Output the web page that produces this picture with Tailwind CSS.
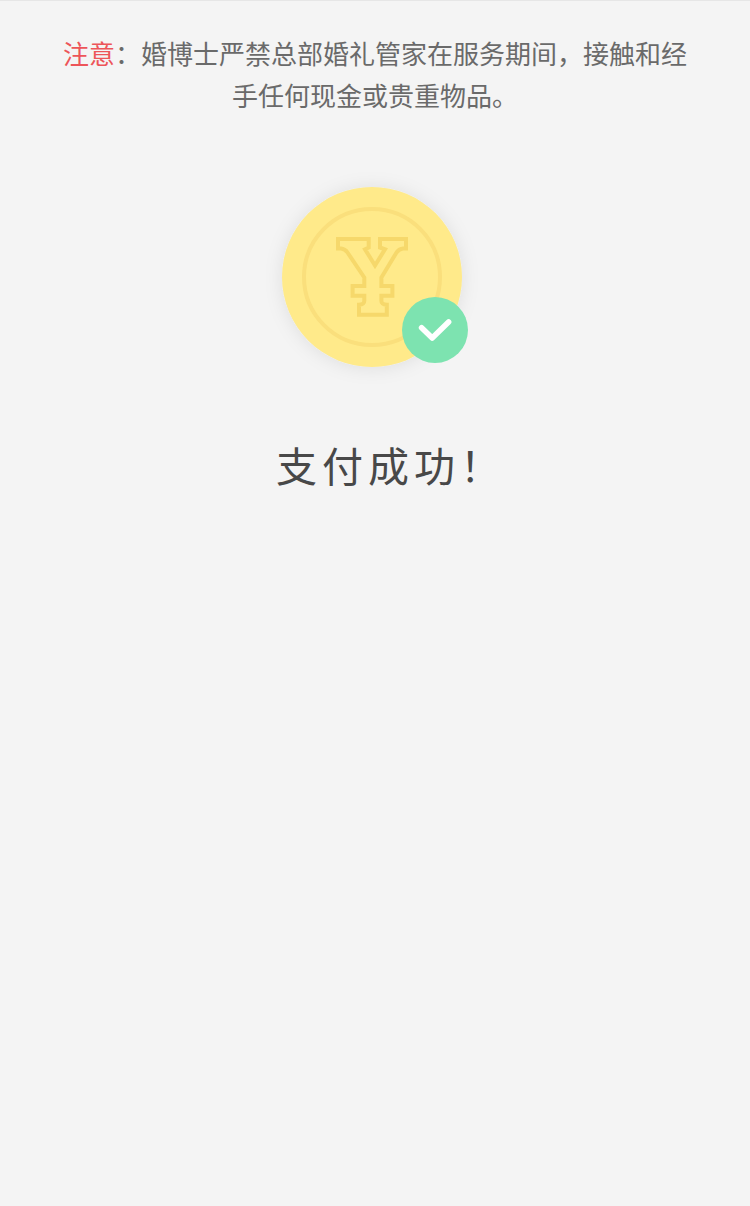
<!DOCTYPE html>
<html lang="zh-CN">
<head>
<meta charset="utf-8">
<title>支付成功</title>
<script src="https://cdn.jsdelivr.net/npm/@tailwindcss/browser@4"></script>
</head>
<body class="min-h-screen bg-[#f4f4f4] border-t border-[#e6e6e6] font-['Noto_Sans_CJK_SC',sans-serif] font-normal flex flex-col items-center">
  <p class="mt-[31px] w-[624px] text-[26px] leading-[42px] text-[#6a6a6a] text-center whitespace-nowrap"><span class="text-[#ed5559]">注意</span>：婚博士严禁总部婚礼管家在服务期间，接触和经<br>手任何现金或贵重物品。</p>
  <svg class="mt-[41px] w-[250px] h-[230px]" viewBox="250 157 250 230" fill="none">
    <defs>
      <filter id="shadow" x="-20%" y="-20%" width="140%" height="140%">
        <feDropShadow dx="0" dy="1" stdDeviation="9" flood-color="#000" flood-opacity="0.09"/>
      </filter>
    </defs>
    <circle cx="372" cy="277" r="90" fill="#ffea8a" filter="url(#shadow)"/>
    <circle cx="372" cy="277" r="68" stroke="#fadf7c" stroke-width="4"/>
    <path stroke="#f6d86b" stroke-width="4" d="M338 239H368.7V247.5L365 249.3L375 265.5L385 249.3L380 247.5V239H406V248.5H403C399.5 248.7 398 250.5 396.5 252.5L381.4 277.5V286H392.4V295.8H381.4V301C381.4 303.5 383 304.5 386.8 304.7V314.8H359V304.7C362.8 304.5 364.3 303.5 364.3 301V295.8H352.6V286H364.3V277.5L347.5 252.5C346 250.3 344 248.7 341 248.5H338Z"/>
    <circle cx="435" cy="330" r="33" fill="#7de3b0"/>
    <path d="M421.6 327.7L432.2 338L448.6 322" stroke="#fff" stroke-width="5.6" stroke-linecap="round" stroke-linejoin="round"/>
  </svg>
  <h1 class="mt-[45px] pl-[32px] text-[41px] leading-[64px] tracking-[5px] font-normal text-[#484848] whitespace-nowrap">支付成功！</h1>
</body>
</html>
